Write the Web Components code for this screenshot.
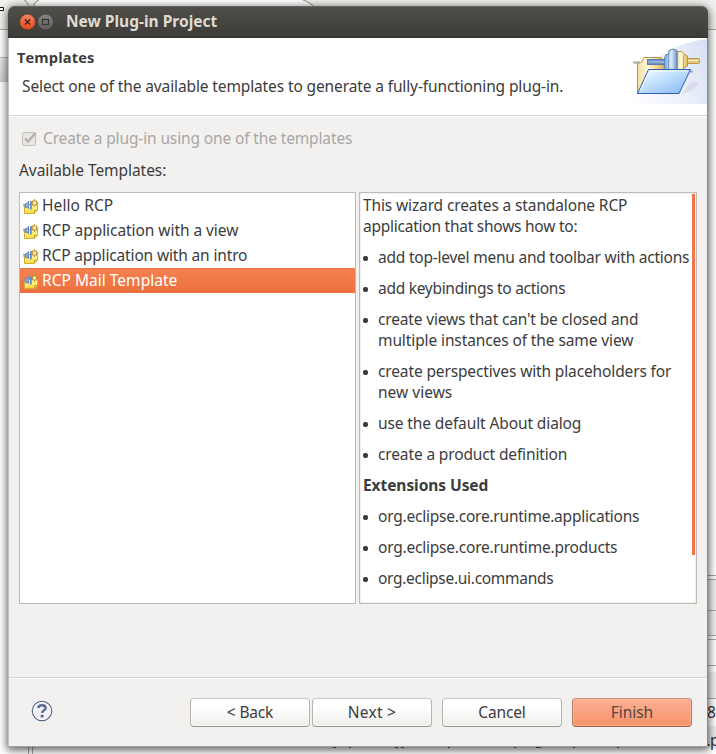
<!DOCTYPE html>
<html lang="en">
<head>
<meta charset="utf-8">
<title>New Plug-in Project</title>
<style>
html, body { margin: 0; width: 716px; height: 754px; overflow: hidden; background: #fff; }
body { font-family: "Noto Sans", "Open Sans", sans-serif; font-size: 15.5px; color: #3c3c3c; position: relative; }
</style>
</head>
<body>
<desk-backdrop></desk-backdrop>
<wizard-window>
  <title-bar slot="title"><fit-text w="151">New Plug-in Project</fit-text></title-bar>
  <wizard-header slot="header">
    <fit-text slot="title" w="77">Templates</fit-text>
    <fit-text slot="message" w="541">Select one of the available templates to generate a fully-functioning plug-in.</fit-text>
  </wizard-header>
  <check-option><fit-text w="309">Create a plug-in using one of the templates</fit-text></check-option>
  <field-label><fit-text w="147">Available Templates:</fit-text></field-label>
  <split-pane>
    <list-box>
      <list-item><fit-text w="71">Hello RCP</fit-text></list-item>
      <list-item><fit-text w="196">RCP application with a view</fit-text></list-item>
      <list-item><fit-text w="205">RCP application with an intro</fit-text></list-item>
      <list-item selected><fit-text w="135">RCP Mail Template</fit-text></list-item>
    </list-box>
    <doc-view>
      <doc-block><fit-text w="264">This wizard creates a standalone RCP</fit-text><fit-text w="214">application that shows how to:</fit-text></doc-block>
      <doc-block bullet><fit-text w="311">add top-level menu and toolbar with actions</fit-text></doc-block>
      <doc-block bullet><fit-text w="187">add keybindings to actions</fit-text></doc-block>
      <doc-block bullet><fit-text w="260">create views that can't be closed and</fit-text><fit-text w="255">multiple instances of the same view</fit-text></doc-block>
      <doc-block bullet><fit-text w="293">create perspectives with placeholders for</fit-text><fit-text w="74">new views</fit-text></doc-block>
      <doc-block bullet><fit-text w="203">use the default About dialog</fit-text></doc-block>
      <doc-block bullet><fit-text w="189">create a product definition</fit-text></doc-block>
      <doc-block heading><fit-text w="125">Extensions Used</fit-text></doc-block>
      <doc-block bullet><fit-text w="261">org.eclipse.core.runtime.applications</fit-text></doc-block>
      <doc-block bullet><fit-text w="239">org.eclipse.core.runtime.products</fit-text></doc-block>
      <doc-block bullet><fit-text w="175">org.eclipse.ui.commands</fit-text></doc-block>
    </doc-view>
  </split-pane>
  <button-bar slot="footer">
    <push-button><fit-text w="46">&lt; Back</fit-text></push-button>
    <push-button><fit-text w="48">Next &gt;</fit-text></push-button>
    <push-button class="apart"><fit-text w="47">Cancel</fit-text></push-button>
    <push-button class="apart" primary><fit-text w="42">Finish</fit-text></push-button>
  </button-bar>
</wizard-window>
<script>
function define(name, html, ready) {
  const template = document.createElement('template');
  template.innerHTML = html;
  customElements.define(name, class extends HTMLElement {
    constructor() {
      super();
      this.attachShadow({ mode: 'open' }).append(template.content.cloneNode(true));
    }
    connectedCallback() { if (ready) ready(this); }
  });
}

define('desk-backdrop', `
<style>:host{position:absolute;inset:0;display:block} svg{display:block} text{font:15.5px "Noto Sans",sans-serif;fill:#333}</style>
<svg width="716" height="754" viewBox="0 0 716 754">
  <defs><linearGradient id="g" x1="0" x2="0" y1="0" y2="1"><stop offset="0" stop-color="#e8e7e6"/><stop offset="1" stop-color="#cfcecc"/></linearGradient></defs>
  <rect width="716" height="30" fill="#f1f0ef"/>
  <path d="M33 6Q34 0 39 0H300Q311 2 317 8H33Z" fill="#fff"/>
  <path d="M24 0Q28 2 29 8M39 0Q34 2 33 8M303 0Q310 2 315 8" fill="none" stroke="#a9a5a1" stroke-width="1.2"/>
  <path d="M0 29.5H10M706 29.5H716" stroke="#a9a7a4"/>
  <path d="M0 7.5H3.5V10.5H0" fill="#fff" stroke="#111"/>
  <rect y="57" width="10" height="25" fill="url(#g)"/><path d="M0 57.5H10" stroke="#bbb"/>
  <rect x="700" y="580" width="16" height="56" fill="#f1f0ef"/>
  <path d="M700 575.5H716M700 579.5H716M700 610.5H716M700 635.5H716M700 639.5H716M700 665.5H716" stroke="#a9a7a4"/>
  <rect x="700" y="672" width="16" height="26" fill="#f1f0ef"/><path d="M700 698.5H716" stroke="#aaa"/>
  <rect x="700" y="726" width="16" height="22" fill="#eeedec"/>
  <text x="707" y="718">8</text><text x="706.5" y="746">.</text><text x="710" y="746">p</text>
  <path d="M333 746.5h3M349 746.5h2M395 746.5h3M401 746.5h3M448 746.5h2M514 746.5h2M536 746.5h5M573 746.5h2M617 746.5h2" stroke="#222" stroke-width="2.6"/>
  <path d="M28.5 740V754M32.5 740V754" stroke="#aaa6a2"/>
</svg>`);

/* One line of text, tracked to a given advance width. */
define('fit-text', `<style>:host{display:block;white-space:nowrap;width:max-content}</style><slot></slot>`, el => {
  const target = +el.getAttribute('w');
  const fit = () => {
    el.style.letterSpacing = '0px';
    const natural = el.getBoundingClientRect().width;
    if (natural) el.style.letterSpacing = ((target + 0.3 - natural) / el.textContent.length).toFixed(4) + 'px';
  };
  customElements.whenDefined('push-button').then(fit);
});

define('wizard-window', `
<style>
:host{position:absolute;left:8px;top:6px;width:700px;height:741px;display:flex;flex-direction:column;box-sizing:border-box;border:solid #b0aeab;border-width:0 1px 1px;border-color:#c4c2bf #8b8986 #a4a09c #c4c2bf;border-radius:7px 7px 0 0;background:#f2f1f0;box-shadow:0 2px 8px 1px rgba(0,0,0,.65)}
main{flex:1;display:flex;flex-direction:column;padding:12px 10px 0;border-top:1px solid #d7d5d2;box-shadow:inset 0 1px #fbfbfa}
footer{height:68px;border-top:1px solid #d6d3d0;box-shadow:inset 0 1px #fbfafa}
</style>
<slot name="title"></slot><slot name="header"></slot><main><slot></slot></main><footer><slot name="footer"></slot></footer>`);

define('title-bar', `
<style>
:host{height:32px;margin:0 -1px;box-sizing:border-box;display:flex;align-items:center;padding:0 0 3px 11px;border-radius:7px 7px 0 0;background:linear-gradient(#504f49,#3c3b37);box-shadow:inset 0 1px #64625b,inset 0 -1px #33322e;font-weight:700;color:#dfdbd2}
svg{margin-top:3px;margin-right:12px}
</style>
<svg width="35" height="18" viewBox="0 0 35 18">
  <defs><linearGradient id="r" x1="0" x2="0" y1="0" y2="1"><stop offset="0" stop-color="#f58262"/><stop offset="1" stop-color="#e2481b"/></linearGradient>
  <linearGradient id="k" x1="0" x2="0" y1="0" y2="1"><stop offset="0" stop-color="#868580"/><stop offset="1" stop-color="#5e5d58"/></linearGradient></defs>
  <circle cx="8.5" cy="9" r="7.9" fill="url(#r)" stroke="#3a3933" stroke-width=".6"/>
  <path d="M6 6.5l5 5M11 6.5l-5 5" stroke="#422018" stroke-width="1.3"/>
  <circle cx="26.5" cy="9" r="7.9" fill="url(#k)" stroke="#3a3933" stroke-width=".6"/>
  <rect x="23.5" y="6.5" width="6" height="5" fill="none" stroke="#35342f" stroke-width="1.2"/>
</svg><slot></slot>`);

define('wizard-header', `
<style>
:host{display:flex;height:77px;background:#fff}
.copy{flex:1;min-width:0}
.title{padding:8px 0 0 8px;font:700 14.6px/22px "Open Sans","Noto Sans",sans-serif}
.msg{padding:7px 0 0 13px;line-height:22px}
svg{flex:none;margin-top:1px}
</style>
<div class="copy"><div class="title"><slot name="title"></slot></div><div class="msg"><slot name="message"></slot></div></div>
<svg width="75" height="66" viewBox="632 39 75 66">
  <defs>
    <linearGradient id="b"><stop offset="0" stop-color="#fff"/><stop offset="1" stop-color="#d5dff4"/></linearGradient>
    <linearGradient id="c" x1="0" x2="0" y1="0" y2="1"><stop offset="0" stop-color="#fff" stop-opacity="0"/><stop offset="1" stop-color="#fff" stop-opacity=".35"/></linearGradient>
    <linearGradient id="f" x1="0" x2="1" y1="0" y2="1"><stop offset="0" stop-color="#f8fcff"/><stop offset=".45" stop-color="#bfe0fd"/><stop offset="1" stop-color="#83b5f1"/></linearGradient>
    <linearGradient id="y" x1="0" x2="1"><stop offset="0" stop-color="#f5dda2"/><stop offset=".4" stop-color="#fff9d9"/><stop offset="1" stop-color="#e0b54c"/></linearGradient>
    <linearGradient id="p" x1="0" x2="1"><stop offset="0" stop-color="#7fa5d6"/><stop offset=".55" stop-color="#dceafa"/><stop offset="1" stop-color="#6f97cb"/></linearGradient>
    <linearGradient id="q" x1="0" x2="0" y1="0" y2="1"><stop offset="0" stop-color="#5578ac"/><stop offset=".45" stop-color="#9bbde8"/><stop offset="1" stop-color="#587bb0"/></linearGradient>
  </defs>
  <path d="M632 104V98C640 58 680 42 707 39V104Z" fill="url(#b)"/><path d="M632 39H707V104H632Z" fill="url(#c)"/>
  <path d="M682 94L691 81Q702 83 696 87Q690 92 682 94Z" fill="#cfc7da" opacity=".45"/>
  <path d="M633 62.5H640M690 71.5H693" stroke="#a8a8a8" stroke-width="2"/>
  <path d="M637.5 93V63H641L644 57.5H661L664 60V80Z" fill="url(#y)" stroke="#b89552"/>
  <path d="M640 64H645L647 60" fill="none" stroke="#fffbe7"/>
  <rect x="647.5" y="59.5" width="18" height="5" fill="url(#q)" stroke="#5a7bad"/>
  <rect x="686.5" y="58.5" width="13" height="5" rx="1" fill="#e7c67a" stroke="#bc9652"/><path d="M687 60.5H698" stroke="#fff3c4"/>
  <path d="M677.5 51.5H682L684 54L687.5 56V66L684 68L682 71H677Z" fill="url(#y)" stroke="#bc9652"/>
  <path d="M683.5 55V68" stroke="#cdaa62"/>
  <path d="M664.5 58L666 54.5H668.5L669 50.5Q673 47.5 677 50.5V72H668L664.5 68Z" fill="url(#p)" stroke="#5f86ba"/>
  <path d="M668.5 54V69" stroke="#7c9fce"/>
  <path d="M648.5 69.5H690.5L679 93.5H637.5Z" fill="url(#f)" stroke="#2f5cb5" stroke-linejoin="round"/>
  <path d="M650 71H688M649 71.5L640 91" stroke="#fff" fill="none" opacity=".8"/>
</svg>`);

define('check-option', `
<style>:host{display:flex;align-items:center;height:21px;padding-left:2px;color:#aaa7a3;box-sizing:border-box;padding-bottom:2px}svg{margin:2px 5px 0 0}</style>
<svg width="17" height="17" viewBox="0 0 17 17"><rect x="1.5" y="2.5" width="13" height="13" rx="2" fill="#e9e7e5" stroke="#c0bdb9"/>
<path d="M4 8.5L7 11.5L14.5 3" fill="none" stroke="#b3b0ab" stroke-width="2.4"/></svg><slot></slot>`);

define('field-label', `<style>:host{display:block;line-height:22px;margin-top:10px}</style><slot></slot>`);

define('split-pane', `<style>:host{display:grid;grid-template-columns:337px 338px;gap:3px;height:412px;margin-top:11px}</style><slot></slot>`);

define('list-box', `<style>:host{display:block;box-sizing:border-box;border:1px solid #bfbcb7;background:#fff}</style><slot></slot>`);

define('list-item', `
<style>
:host{display:flex;align-items:center;height:25px;padding:0 0 2px 3px;box-sizing:border-box}
:host([selected]){color:#fff;background:linear-gradient(#f58150,#ec703d);box-shadow:inset 0 1px #e97746}
svg{margin-right:3px;margin-top:2px}
</style>
<svg width="16" height="16" viewBox="0 0 16 16">
  <defs><linearGradient id="n" x1="0" x2="0" y1="0" y2="1"><stop offset="0" stop-color="#fff8ad"/><stop offset="1" stop-color="#f8dc35"/></linearGradient></defs>
  <path d="M1.5 6.5H14.5V12L11.5 15.5H1.5Z" fill="url(#n)" stroke="#d0ae3c"/><path d="M11.5 15V12.5H14" fill="#fff3a0" stroke="#c09a28"/>
  <path d="M0 6.5H4M0 8H3" stroke="#7f9fca"/><path d="M2.5 5.5H4L5.5 3.5V10.5L4 9.5H2.5Z" fill="#8fb4e1" stroke="#6288bd"/>
  <path d="M7.9 3V11.5" stroke="#6388bd" stroke-width="1.7"/>
  <path d="M11.5 1.2V8.8M7.8 5H15.2M9.2 2.7L13.8 7.3M13.8 2.7L9.2 7.3" stroke="#b98c35" stroke-width="1.4"/><circle cx="11.5" cy="5" r="1.7" fill="#fff3b0"/>
</svg><slot></slot>`);

define('doc-view', `
<style>
:host{display:flex;box-sizing:border-box;border:1px solid #bfbcb7;background:#fff;overflow:hidden;box-shadow:inset 1px 1px #f0efee,inset -1px -1px #f0efee}
.doc{flex:1;min-width:0;display:flex;flex-direction:column;gap:10px;padding:2px 0 0 3px}
.bar{width:3px;height:361px;margin:1px 1px 0 0;background:#f17746}
</style>
<div class="doc"><slot></slot></div><div class="bar"></div>`);

define('doc-block', `
<style>
:host{display:flex;line-height:21px}
:host([heading]){font-weight:700}
i{display:none;flex:none;width:5px;height:5px;border-radius:2px;background:#3c3c3c;margin:9px 10px 0 0}
:host([bullet]) i{display:block}
</style><i></i><div><slot></slot></div>`);

define('button-bar', `
<style>
:host{display:flex;align-items:flex-start;padding:20px 15px 0 22px}
svg{margin-top:2px;margin-right:auto}
::slotted(*){margin-left:2px}
::slotted(.apart){margin-left:10px}
</style>
<svg width="22" height="22" viewBox="0 0 22 22"><circle cx="11" cy="11" r="9.7" fill="#f0f0f2" stroke="#56688c" stroke-width="1.2"/><circle cx="11" cy="11" r="8.5" fill="none" stroke="#fff"/>
<path d="M7.2 8Q7.5 5.2 11 5.2Q14.6 5.2 14.6 8Q14.6 9.6 12.8 10.5Q11.2 11.3 11.2 13" fill="none" stroke="#5c6b8e" stroke-width="2.4"/><circle cx="11.1" cy="16.1" r="1.6" fill="#5c6b8e"/></svg>
<slot></slot>`);

define('push-button', `
<style>
:host{display:flex;align-items:center;justify-content:center;box-sizing:border-box;width:120px;height:29px;padding-bottom:2px;border:1px solid;border-color:#cbc6c1 #b5b1ac #999692;border-radius:4px;background:linear-gradient(#fff 30%,#eeedeb);box-shadow:inset 0 0 0 1px rgba(255,255,255,.6)}
:host([primary]){background:linear-gradient(#fdb094,#f6926a);border-color:#c19582 #af7c67 #98644e;box-shadow:inset 0 0 0 1px rgba(255,190,165,.6);color:#554640}
</style><slot></slot>`);
</script>
</body>
</html>
